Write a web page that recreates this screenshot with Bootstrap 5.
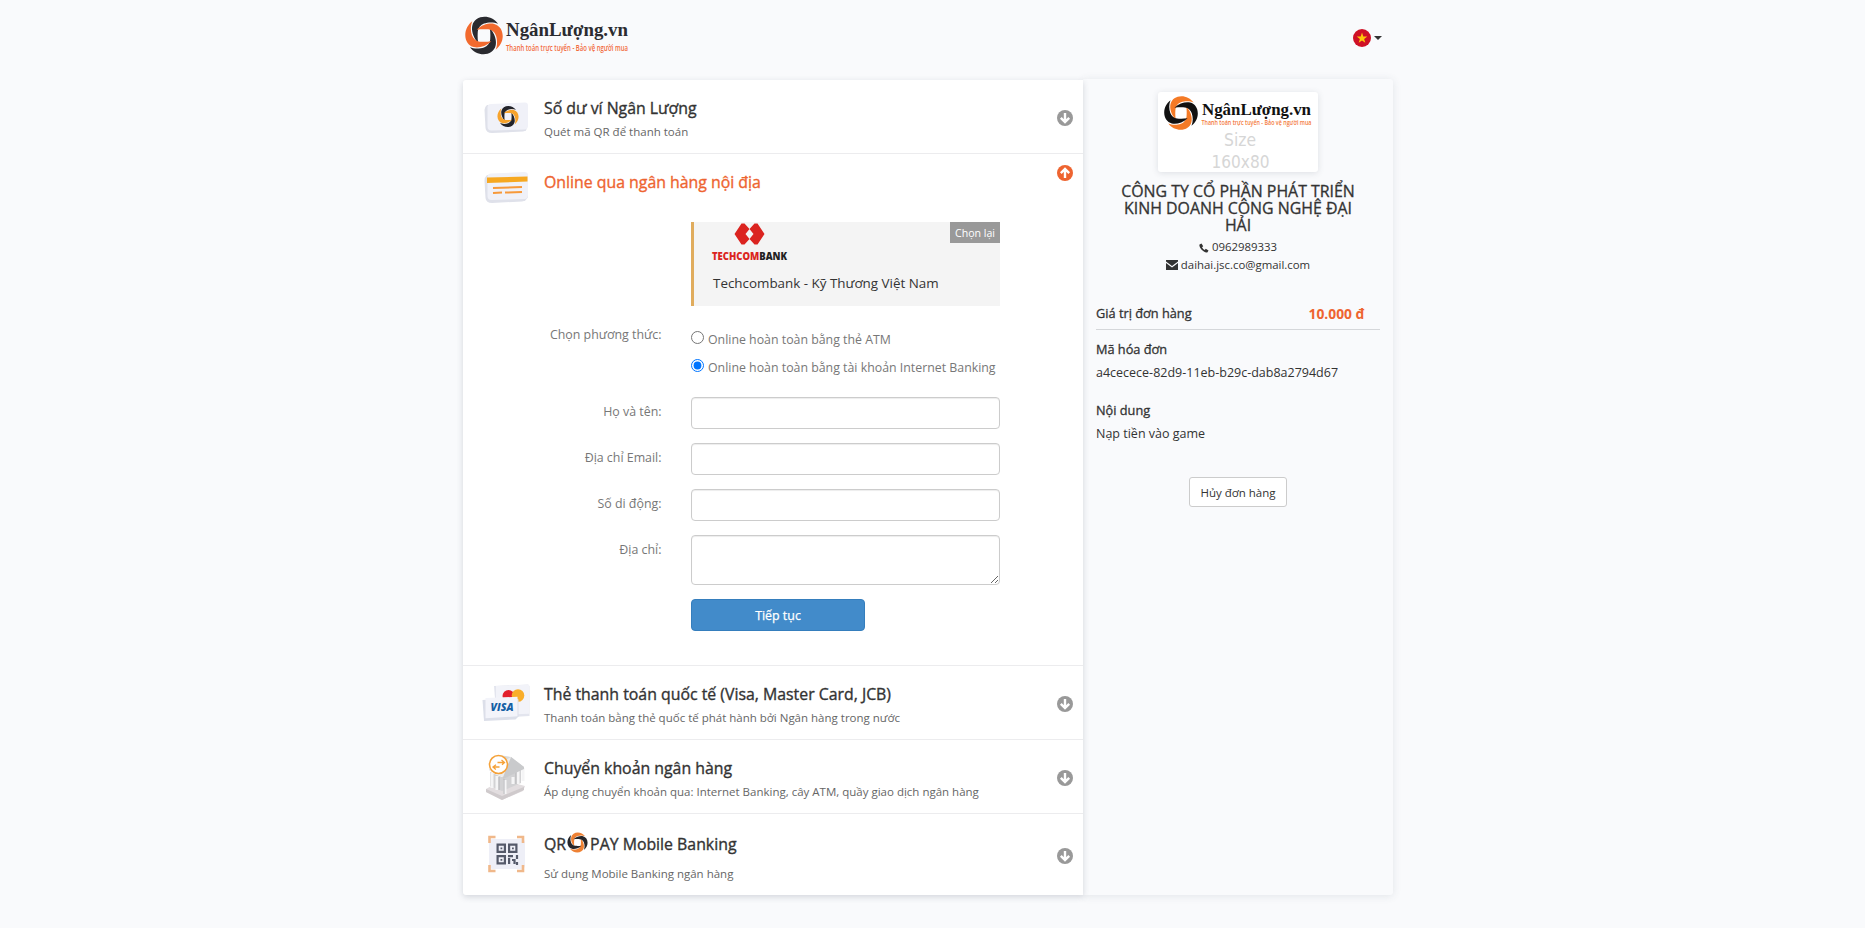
<!DOCTYPE html>
<html lang="vi">
<head>
<meta charset="utf-8">
<title>NgânLượng.vn</title>
<link href="https://cdn.jsdelivr.net/npm/bootstrap@5.3.0/dist/css/bootstrap.min.css" rel="stylesheet">
<style>
body{background:#f9fafc;font-family:"Open Sans","Noto Sans",sans-serif;font-size:12.4px;color:#333;height:928px;overflow:hidden}
.shell{width:930px;margin-left:463px}
.topbar{height:80px}
.topbar svg{overflow:visible}
.panel-main{width:620px;height:815px;background:#fff;box-shadow:0 2px 6px rgba(60,70,90,.2);position:relative;border-radius:3px 0 0 3px}
.panel-side{width:310px;margin-top:-1px;height:816px;box-shadow:0 1px 8px rgba(60,70,90,.12);border-radius:0 3px 3px 0;padding:13px 13px 0}
.method{height:74px;border-bottom:1px solid #ececee}
.method.tall{height:512px}
.method:last-child{height:81px;border:0}
.pic{width:81px;flex:none;padding-left:18.500px}
.pic svg{display:block}
.m-body{padding-top:18px}
.m-title{font-size:15.85px;-webkit-text-stroke:.35px currentColor;line-height:20px;white-space:nowrap}
.m-desc{font-size:11.5px;line-height:16px;color:#666;white-space:nowrap;margin-top:6px}
.qr-title{margin-top:-5px;height:34px}
.qr-title + .m-desc{margin-top:5px}
.orange{color:#ee6430}
.arrow{width:16px;height:16px;margin:2px 10px 0 0;flex:none}
.arrow.up{margin-top:11px}
.indent{margin-left:228px}
.bankbox{width:309px;height:84px;margin-top:14px;background:#f4f4f4;border-left:3px solid #e0ac5d;padding:1px 0 0 19px}
.banklogo{margin-left:-3px}
.bankname{font-size:13.4px;line-height:20px;white-space:nowrap;margin-top:12px}
.again{background:#999;color:#fff;font-size:10.6px;line-height:22px;height:21px;width:50px;text-align:center;top:0;right:0}
.ways{margin-top:20px;height:71px}
.lab{width:198.500px;text-align:right;color:#777;line-height:18px;flex:none;margin-right:29.500px;white-space:nowrap;padding-top:6px}
.ways .lab{padding-top:0}
.opt{color:#777;font-size:12.35px;line-height:18px;white-space:nowrap;margin-top:10px;display:flex}
.opt:first-child{margin-top:5px}
.opt input{width:13px;height:13px;margin:0 4px 0 0}
.frow{margin-bottom:14px}
.field{width:309px;height:32px;border:1px solid #ccc;border-radius:4px;background:#fff;box-shadow:inset 0 1px 1px rgba(0,0,0,.075);display:block}
textarea.field{height:50px;resize:both}
.go{width:174px;height:32px;background:#428bca;border:1px solid #357ebd;border-radius:4px;color:#fff;-webkit-text-stroke:.25px currentColor;line-height:18px;padding:1px 0 0}
.shop{width:160px;height:80px;background:#fff;box-shadow:0 1px 6px rgba(60,70,90,.15);border-radius:3px;display:block;margin:0 auto}
.company{font-size:15.9px;-webkit-text-stroke:.3px currentColor;line-height:17px;text-align:center;margin-top:11px;white-space:nowrap}
.contact{font-size:11.4px;line-height:17.5px;text-align:center;margin-top:4px}
.half{-webkit-text-stroke:.3px currentColor;font-size:12.75px;line-height:18px}
.total{margin-top:31px;height:26px;border-bottom:1px solid #d5d7da;width:284px;padding-right:15.5px}
.total b{font-size:13.8px;line-height:19px}
.val{line-height:18px;white-space:nowrap;margin-top:6px;font-size:12.5px}
.cancel{width:98px;height:30px;background:#fff;border:1px solid #ccc;border-radius:3px;font-size:11.5px;line-height:18px;padding:1px 0 0;color:#333;display:block;margin:34px auto 0}
</style>
</head>
<body>
<svg width="0" height="0" class="position-absolute">
<defs>
<path id="blade" d="M34.500 8C31 3.500 26 .8 20.500 .8C14.500 .8 9.500 4 8.100 9.500C6.800 14 8.500 22 14 27.500C13.200 22 13.500 18 13.700 15.500C14.200 12 16.500 9 20 7.800C24 6.300 30 6 34.500 8z"/>
<symbol id="swirl" viewBox="0 0 40 40"><g fill="var(--a)"><use href="#blade"/><use href="#blade" transform="rotate(180 20 20)"/></g><g fill="var(--b)"><use href="#blade" transform="rotate(90 20 20)"/><use href="#blade" transform="rotate(270 20 20)"/></g></symbol>
<symbol id="down" viewBox="0 0 16 16"><circle cx="8" cy="8" r="8" fill="#999"/><path d="M8 3v8.500M3.800 7.800L8 12l4.200-4.200" fill="none" stroke="#fff" stroke-width="2.400"/></symbol>
</defs>
</svg>
<div class="shell">
<header class="topbar d-flex justify-content-between">
<svg width="170" height="64" viewBox="463 0 170 64"><svg x="464.500" y="16" width="39" height="39" style="--a:#2a2a2f;--b:#f26a2e"><use href="#swirl"/></svg>
<text x="506" y="36" font-family="Liberation Serif" font-weight="700" font-size="19" fill="#2b2b30" textLength="122" lengthAdjust="spacingAndGlyphs">NgânLượng.vn</text>
<text x="506" y="50.500" font-family="Open Sans" font-size="8.500" font-weight="600" fill="#f26a3c" textLength="122" lengthAdjust="spacingAndGlyphs">Thanh toán trực tuyến - Bảo vệ người mua</text></svg>
<svg width="43" height="60" viewBox="1350 0 43 60"><circle cx="1362" cy="38" r="9" fill="#cf1126"/><path d="M1362 32.500l1.300 4h4l-3.200 2.400 1.200 3.900-3.300-2.400-3.300 2.400 1.200-3.900-3.200-2.400h4z" fill="#fdc80a"/><path d="M1374 36h8l-4 4z" fill="#333"/></svg>
</header>
<div class="d-flex align-items-start">
<main class="panel-main">
<section class="method d-flex">
<div class="pic pt-3"><svg width="50" height="44" viewBox="482 96 50 44"><path d="M487 105l37-2q3 0 3 2v22q0 4-4 4.500l-31 1.500q-6 0-6.500-5l-1-18q0-3 2.500-5z" fill="#dfe1ea"/><path d="M491 104l34-1.500q3 0 3 3v20q0 4-3.500 4l-33 1q-4 0-4-4v-19q0-3.500 3.500-3.500z" fill="#f0f1f8"/><svg x="497" y="105.500" width="22" height="22" style="--a:#23242a;--b:#f7a32c"><use href="#swirl"/></svg></svg></div>
<div class="m-body flex-grow-1"><div class="m-title">Số dư ví Ngân Lượng</div><div class="m-desc">Quét mã QR để thanh toán</div></div>
<svg class="arrow align-self-center"><use href="#down"/></svg>
</section>
<section class="method tall">
<div class="d-flex">
<div class="pic" style="padding-top:15px"><svg width="50" height="39" viewBox="482 170 50 39"><path d="M487 176l35-2q4 0 5 4l1 20q-2 4-6 4.500l-30 1.500q-6 0-6.500-5l-1-17q0-4 2.500-6z" fill="#dfe1ea"/><path d="M491 174.500l33-1.500q4 0 4 3v20q0 4-3.500 4l-33 1q-4 0-4-4v-19q0-3.500 3.500-3.500z" fill="#f0f1f8"/><path d="M487 178.500l40.500-1v5L487 184z" fill="#f6a821"/><path d="M493 189l29-1M493 194l9-.4M505 193.600l17-.6" stroke="#f7993a" stroke-width="2"/></svg></div>
<div class="m-body flex-grow-1"><div class="m-title orange">Online qua ngân hàng nội địa</div></div>
<svg class="arrow up" viewBox="0 0 16 16"><circle cx="8" cy="8" r="8" fill="#ee6430"/><path d="M8 13V4.500M3.800 8.200L8 4l4.200 4.200" fill="none" stroke="#fff" stroke-width="2.400"/></svg>
</div>
<div class="bankbox indent position-relative">
<svg width="80" height="38" viewBox="710 223 80 38" class="banklogo d-block"><path d="M741.500 223.500h3l5 5.500-4 5 4 5-5 5.500h-3L734.500 234z" fill="#db2420"/><path d="M757.500 223.500h-3l-5 5.500 4 5-4 5 5 5.500h3L764.500 234z" fill="#db2420"/><text x="712" y="259.500" font-family="Open Sans" font-weight="800" font-size="9.700" textLength="75" lengthAdjust="spacingAndGlyphs" fill="#db2420">TECHCOM<tspan fill="#222">BANK</tspan></text></svg>
<div class="bankname">Techcombank - Kỹ Thương Việt Nam</div>
<div class="again position-absolute">Chọn lại</div>
</div>
<div class="ways d-flex"><div class="lab">Chọn phương thức:</div>
<div><label class="opt"><input type="radio" name="m">Online hoàn toàn bằng thẻ ATM</label><label class="opt"><input type="radio" name="m" checked>Online hoàn toàn bằng tài khoản Internet Banking</label></div></div>
<div class="d-flex frow"><div class="lab">Họ và tên:</div><input class="field"></div>
<div class="d-flex frow"><div class="lab">Địa chỉ Email:</div><input class="field"></div>
<div class="d-flex frow"><div class="lab">Số di động:</div><input class="field"></div>
<div class="d-flex frow"><div class="lab">Địa chỉ:</div><textarea class="field"></textarea></div>
<button class="go indent">Tiếp tục</button>
</section>
<section class="method d-flex">
<div class="pic pt-3"><svg width="50" height="44" viewBox="482 682 50 44"><path d="M494 686l34-1.500 1.500 1.500v30l-33 2z" fill="#e3e5ee"/><path d="M496 686l33-1.200v29l-33 1.200z" fill="#f2f3f9"/><circle cx="508.500" cy="696" r="6" fill="#e2202c"/><circle cx="518" cy="695.500" r="6.300" fill="#f9ae2b"/><path d="M482.500 700l33-2.500 3 2v17l-3 3-31.500 1.500z" fill="#dcdfe9"/><path d="M485.500 698l32-1.200v19.500l-32 2z" fill="#f3f4fa"/><text x="490.500" y="711" font-family="Open Sans" font-size="11" font-weight="800" font-style="italic" fill="#1560a5" textLength="23" lengthAdjust="spacingAndGlyphs">VISA</text></svg></div>
<div class="m-body flex-grow-1"><div class="m-title">Thẻ thanh toán quốc tế (Visa, Master Card, JCB)</div><div class="m-desc">Thanh toán bằng thẻ quốc tế phát hành bởi Ngân hàng trong nước</div></div>
<svg class="arrow align-self-center"><use href="#down"/></svg>
</section>
<section class="method d-flex">
<div class="pic" style="padding-top:7.500px"><svg width="50" height="56" viewBox="482 747 50 56"><path d="M486 788l16-9 23 6-2 5-21 9-16-8z" fill="#e2dddf"/><path d="M486 788l16 7 22-9v3l-22 10-16-8z" fill="#cfcacc"/><path d="M490 771v14l12 5v-14zM502 776v14l19-8v-14z" fill="#d2d2d4"/><path d="M492 772v15M497 775v14M505 779v14M513 776v7M518 769v14M523 767v13" stroke="#f5f5f6" stroke-width="3"/><path d="M504 778v15M499 776v13M516 771v12" stroke="#b4b4b7"/><path d="M489 769l14 7 21-10-13-10-12-2z" fill="#d9dadb"/><path d="M503 776l8-20 13 10v2l-21 10z" fill="#c9cacc"/><path d="M489 769l22-13-8 20z" fill="#ececed"/><circle cx="498.500" cy="763.500" r="9" fill="#fff" stroke="#f5a23a" stroke-width="1.600"/><path d="M497.500 761.500h6.500m-2.500-2.500l3 2.500-2.500 2.200M499.500 766h-6m2.500-2.300l-3 2.300 2.800 2.500" stroke="#f5a23a" stroke-width="1.300" fill="none"/></svg></div>
<div class="m-body flex-grow-1"><div class="m-title">Chuyển khoản ngân hàng</div><div class="m-desc">Áp dụng chuyển khoản qua: Internet Banking, cây ATM, quầy giao dịch ngân hàng</div></div>
<svg class="arrow align-self-center"><use href="#down"/></svg>
</section>
<section class="method d-flex">
<div class="pic" style="padding-top:16px"><svg width="50" height="50" viewBox="482 830 50 50"><path d="M493 839h28q4 0 4 4v22q0 4-4 4h-28q-4 0-4-4v-22q0-4 4-4z" fill="#eeeff7"/><path d="M489.500 843v-6h6M517 837h6v6M523 865v6h-6M495.500 871h-6v-6" fill="none" stroke="#f0b88a" stroke-width="2.600"/><g fill="none" stroke="#555a6a" stroke-width="2.200"><path d="M497.600 844.600h7.300v7.300h-7.300zM509.100 844.600h7.300v7.300h-7.300zM497.600 856.100h7.300v7.300h-7.300z"/><path d="M508 856.100h5M509.100 858v6M512 860h2.500v4M517 855v4M517 862v3"/></g><path d="M500.500 847.500h1.800v1.800h-1.800zM512 847.500h1.800v1.800H512zM500.500 859h1.800v1.800h-1.800z" fill="#555a6a"/></svg></div>
<div class="m-body flex-grow-1"><div class="m-title qr-title d-flex align-items-center">QR<svg width="21" height="21" viewBox="0 0 40 40" class="mb-1" style="--a:#ee8134;--b:#26262a;margin:0 2px 0 1px"><use href="#swirl"/></svg>PAY Mobile Banking</div><div class="m-desc">Sử dụng Mobile Banking ngân hàng</div></div>
<svg class="arrow align-self-center"><use href="#down"/></svg>
</section>
</main>
<aside class="panel-side">
<svg class="shop" viewBox="1158 92 160 80"><svg x="1163.500" y="95.500" width="35" height="35" style="--a:#f47a26;--b:#111"><use href="#swirl"/></svg>
<text x="1202" y="114.500" font-family="Liberation Serif" font-weight="700" font-size="17" fill="#111" textLength="109" lengthAdjust="spacingAndGlyphs">NgânLượng.vn</text>
<text x="1201.500" y="125" font-family="Open Sans" font-size="7.500" font-weight="600" fill="#f47a3c" textLength="110" lengthAdjust="spacingAndGlyphs">Thanh toán trực tuyến - Bảo vệ người mua</text>
<g font-family="DejaVu Sans" font-size="17" fill="#d6d6d6" text-anchor="middle"><text x="1240" y="146" textLength="32" lengthAdjust="spacingAndGlyphs">Size</text><text x="1240.500" y="167.500" textLength="58" lengthAdjust="spacingAndGlyphs">160x80</text></g></svg>
<div class="company">CÔNG TY CỔ PHẦN PHÁT TRIỂN<br>KINH DOANH CÔNG NGHỆ ĐẠI<br>HẢI</div>
<div class="contact"><svg width="10" height="10" viewBox="0 0 10 10"><path d="M.5 1.500L2.500.5l1.700 2.700-1.200 1.100q1 1.900 2.700 2.700l1.100-1.200L9.500 7.500 8.500 9.300Q7 10 4.500 8.300T1 4.500Q0 2.500.5 1.500z" fill="#333"/></svg> 0962989333<br><svg width="12" height="10" viewBox="0 0 12 10"><path d="M0 0h12v1.500L6 6 0 1.500zM0 3l6 4.500L12 3v7H0z" fill="#333"/></svg> daihai.jsc.co@gmail.com</div>
<div class="total d-flex justify-content-between"><span class="half">Giá trị đơn hàng</span><b class="orange">10.000 đ</b></div>
<div class="half" style="margin-top:10px">Mã hóa đơn</div><div class="val">a4cecece-82d9-11eb-b29c-dab8a2794d67</div>
<div class="half" style="margin-top:19px">Nội dung</div><div class="val">Nạp tiền vào game</div>
<button class="cancel">Hủy đơn hàng</button>
</aside>
</div>
</div>
<script src="https://cdn.jsdelivr.net/npm/bootstrap@5.3.0/dist/js/bootstrap.bundle.min.js"></script>
</body>
</html>
